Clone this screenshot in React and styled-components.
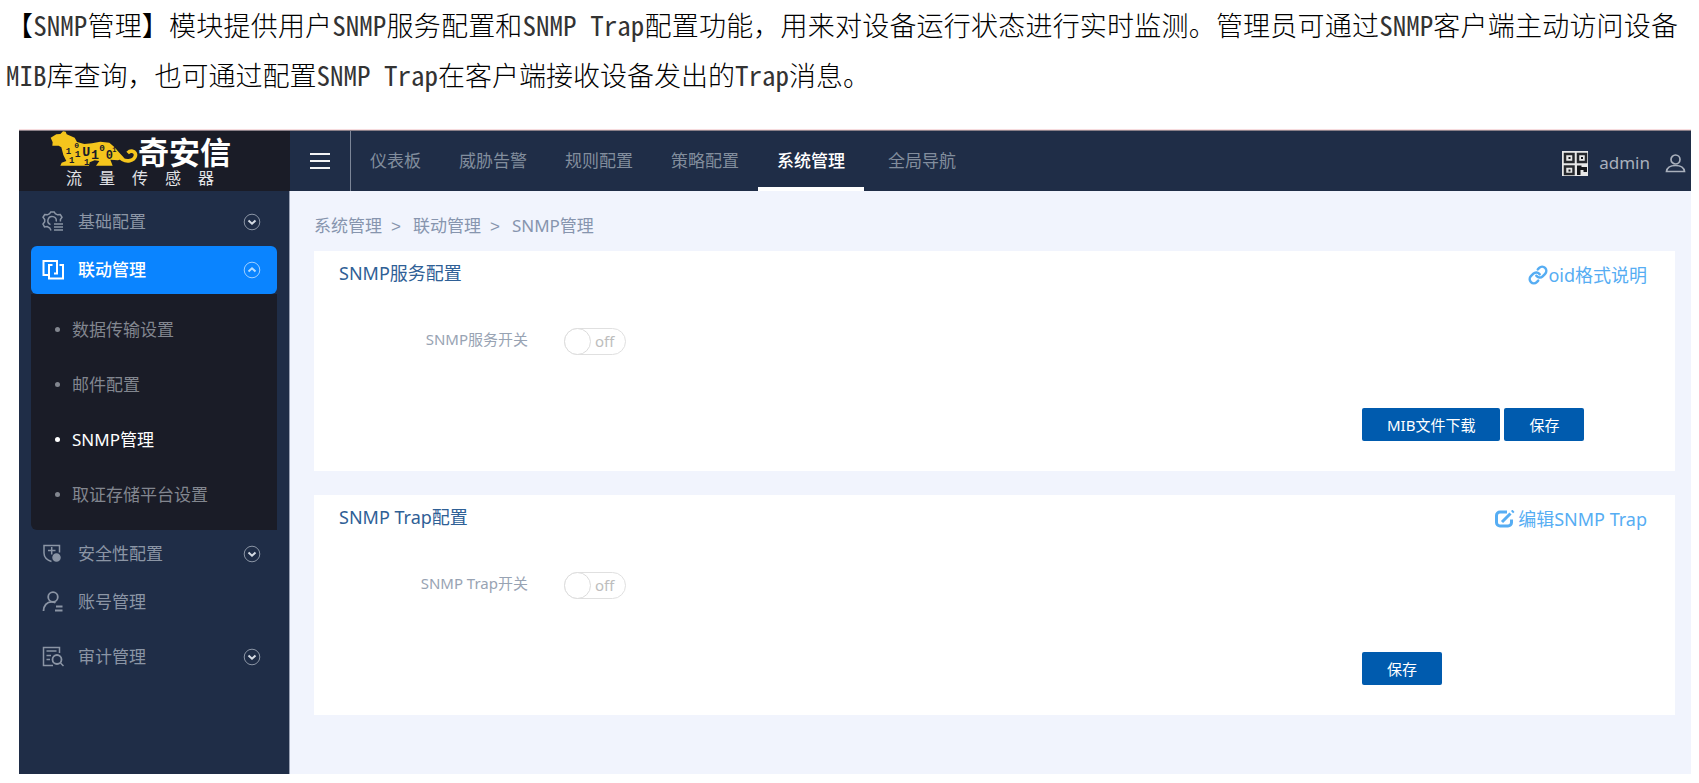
import React, { useState } from 'react';
import styled, { createGlobalStyle } from 'styled-components';
import { Link as LinkIcon } from 'lucide-react';

const GlobalStyle = createGlobalStyle`
  *, *::before, *::after { box-sizing: border-box; }
  body {
    margin: 0;
    background: #fff;
    font-family: "Noto Sans", "Noto Sans CJK SC", sans-serif;
    font-size: 17px;
    line-height: 24px;
  }
  button, input { font: inherit; }
  a { color: inherit; text-decoration: none; }
  ul, ol, p, h1, h2 { margin: 0; padding: 0; list-style: none; font-weight: 400; font-size: inherit; }
`;

/* Intro paragraph */
const Intro = styled.p`
  padding: 0 21px 0 6px;
  margin-bottom: 30px;
  font-family: "Noto Sans CJK SC", sans-serif;
  font-size: 27px;
  font-weight: 300;
  line-height: 50px;
  color: #000;
  text-align: justify;
`;
const Latin = styled.span`
  font-family: "Noto Sans Mono CJK SC", monospace;
  color: #333;
`;

/* Application frame */
const Frame = styled.div`
  display: flex;
  margin: 0 8px 10px 19px;
  border-top: 1px solid #8b8088;
  box-shadow: 0 -1px #f7dcde;
  background: #f1f4fd;
`;
const Sidebar = styled.aside`
  flex: 0 0 271px;
  background: #1f2d47;
  border-right: 1px solid #9aa2b5;
`;
const Brand = styled.div`
  height: 60px;
  padding-left: 31px;
  margin-right: -1px;
  background: #1a1c27;
`;
const BrandTop = styled.div`
  display: flex;
  height: 36px;
`;
const BrandName = styled.span`
  font-size: 31px;
  font-weight: 700;
  line-height: 42px;
  color: #fff;
`;
const BrandSub = styled.div`
  display: flex;
  gap: 17px;
  padding-left: 16px;
  font-size: 16px;
  line-height: 22px;
  color: #e3e4e8;
`;
const Menu = styled.ul`
  padding: 7px 12px 93px;
`;
const MenuItem = styled.li`
  margin-top: ${(p) => (p.$spaced ? 7 : 0)}px;
`;
const MenuButton = styled.button`
  display: flex;
  align-items: center;
  width: 100%;
  height: 48px;
  padding: 0 16px 0 11px;
  border: 0;
  border-radius: 6px;
  background: ${(p) => (p.$active ? '#0a84ff' : 'transparent')};
  color: ${(p) => (p.$active ? '#fff' : '#8b95a5')};
  text-align: left;
  cursor: pointer;
`;
const MenuText = styled.span`
  flex: 1;
  padding-left: 14px;
  font-weight: ${(p) => (p.$active ? 500 : 400)};
`;
const SubMenu = styled.ul`
  padding: 8px 0;
  background: #1a1c27;
  border-radius: 0 0 0 6px;
`;
const SubLink = styled.a`
  display: flex;
  align-items: center;
  height: 55px;
  padding-left: 24px;
  gap: 12px;
  color: ${(p) => (p.$active ? '#fff' : '#82868f')};
  &::before {
    content: "";
    width: 5px;
    height: 5px;
    border-radius: 50%;
    background: currentColor;
  }
`;

/* Top bar */
const Main = styled.div`
  flex: 1;
  min-width: 0;
`;
const TopBar = styled.header`
  display: flex;
  height: 60px;
  background: #1f2d47;
`;
const BurgerButton = styled.button`
  width: 61px;
  padding: 0;
  border: 0;
  border-right: 1px solid #7c8698;
  background: none;
  cursor: pointer;
  svg { display: block; margin: 0 auto; }
`;
const Nav = styled.nav`
  display: flex;
  flex: 1;
`;
const NavLink = styled.a`
  display: flex;
  align-items: center;
  padding: 3px 19px 0;
  margin-left: ${(p) => (p.$spaced ? 5 : 0)}px;
  border-bottom: 4px solid ${(p) => (p.$active ? '#fff' : 'transparent')};
  color: ${(p) => (p.$active ? '#fff' : '#828d9d')};
  font-weight: ${(p) => (p.$active ? 500 : 400)};
`;
const UserArea = styled.div`
  display: flex;
  align-items: center;
  gap: 11px;
  padding: 4px 5px 0 0;
  color: #a9b0bc;
`;
const IconButton = styled.button`
  display: flex;
  padding: 0;
  border: 0;
  background: none;
  color: inherit;
  cursor: pointer;
`;
const UserName = styled.span`
  padding-right: 4px;
`;

/* Page content */
const Content = styled.main`
  padding: 23px 16px 58px 24px;
`;
const Crumbs = styled.ol`
  display: flex;
  padding-bottom: 12px;
  color: #8795ae;
`;
const Crumb = styled.li`
  & + &::before {
    content: ">";
    padding: 0 12px 0 9px;
    font-family: "Liberation Sans", sans-serif;
  }
`;
const Card = styled.section`
  padding-bottom: 30px;
  background: #fff;
  & + & { margin-top: 24px; }
`;
const CardHead = styled.div`
  display: flex;
  justify-content: space-between;
  align-items: center;
  height: 48px;
  padding: 0 28px 0 25px;
  font-size: 18px;
`;
const CardTitle = styled.h2`
  padding-bottom: 4px;
  color: #2f6096;
`;
const CardLink = styled.a`
  display: flex;
  align-items: center;
  gap: ${(p) => p.$gap}px;
  color: #56adf3;
`;
const Field = styled.div`
  display: flex;
  align-items: center;
  gap: 36px;
  height: 28px;
  margin: 28px 0 53px;
  font-size: 15px;
`;
const FieldLabel = styled.label`
  width: 214px;
  padding-bottom: 4px;
  text-align: right;
  color: #98a3b3;
`;
const SwitchBox = styled.label`
  display: flex;
  align-items: center;
  width: 62px;
  height: 27px;
  border: 1px solid #e0e0e0;
  border-radius: 14px;
  color: #bdbdbd;
  cursor: pointer;
`;
const SwitchInput = styled.input`
  appearance: none;
  width: 27px;
  height: 27px;
  margin: 0 4px 0 -1px;
  border: 1px solid #dcdcdc;
  border-radius: 50%;
  background: #fff;
  cursor: pointer;
`;
const Actions = styled.div`
  display: flex;
  gap: 4px;
  width: 313px;
  margin-left: auto;
`;
const PrimaryButton = styled.button`
  height: 33px;
  padding: 0 25px;
  border: 0;
  border-radius: 2px;
  background: #005bae;
  color: #fff;
  font-size: 15px;
  cursor: pointer;
`;

const stroke = { fill: 'none', stroke: 'currentColor', strokeWidth: 1.5 };

const GearListIcon = () => (
  <svg width="22" height="22" viewBox="0 0 22 22" {...stroke}>
    <path d="M9 19.500L7.800 17 5.200 15.600 2.500 15.900 1 13 2.700 10.700V8.600L1 6.300 2.700 3.500 5.400 3.800 7.600 2.600 8.800.9H12.200L13.300 2.600 15.500 3.800 18.300 3.500 20 6.300 18.400 8.600V10.500" />
    <path d="M8.500 13.600A4.200 4.200 0 1 1 14.200 10.500M12 13H21M12 16H21M12 19H21" />
  </svg>
);
const CopyIcon = () => (
  <svg width="22" height="22" viewBox="0 0 22 22" {...stroke} strokeWidth="2">
    <path d="M7 16H1.500V2H15V14.500H12M10.500 6H7V19.500H21V6H17.500" />
  </svg>
);
const ShieldIcon = () => (
  <svg width="22" height="22" viewBox="0 0 22 22" {...stroke}>
    <path d="M9.500 18.500C5 17 2 14 2 10V2.500H17.500V9.500M6 7.500H13.500M9.700 4V11.500" />
    <circle cx="14.500" cy="14.500" r="3.500" fill="currentColor" />
  </svg>
);
const AccountIcon = () => (
  <svg width="22" height="22" viewBox="0 0 22 22" {...stroke} strokeWidth="1.8">
    <circle cx="11" cy="6" r="4.800" />
    <path d="M1.500 20C1.500 14.500 5 10.800 9.500 10.800C11 10.800 12.500 11.200 13.500 11.800M14 15.500H20.500M13 19.500H20.500" />
  </svg>
);
const AuditIcon = () => (
  <svg width="22" height="22" viewBox="0 0 22 22" {...stroke}>
    <path d="M11 19.500H1.500V1.500H17.500V7M4.500 5H14.500M4.500 9.500H9M4.500 13.500H8M18.500 17L21.500 20" />
    <circle cx="15" cy="13.500" r="4.500" strokeWidth="1.800" />
  </svg>
);
const ArrowIcon = ({ up }) => (
  <svg width="18" height="18" viewBox="0 0 18 18" fill="none" stroke="currentColor">
    <circle cx="9" cy="9" r="7.800" opacity={up ? 0.6 : 1} />
    <path
      d={up ? 'M5.500 10.500 9 7.300 12.500 10.500' : 'M5.500 7.500 9 10.700 12.500 7.500'}
      stroke={up ? '#b5dcff' : '#d5dbe4'}
      strokeWidth="2"
    />
  </svg>
);
const QrIcon = () => (
  <svg width="26" height="25" viewBox="0 0 26 25">
    <path d="M0 0H26V25H0Z" fill="#e8e8e8" />
    <g fill="none" stroke="#26282c" strokeWidth="2.500">
      <path d="M3 3H11.500V11H3ZM16 3H24V11H16ZM3 15.500H11.500V23H3Z" />
    </g>
    <path d="M6.500 6H8.500V8H6.500ZM19 6H21V8H19ZM6.500 18.500H8.500V20.500H6.500ZM15 14.500H19.500V16H25V21H21.500V19H18.500V24H15Z" fill="#15171b" />
  </svg>
);
const UserIcon = () => (
  <svg width="21" height="19" viewBox="0 0 21 19" fill="none" stroke="currentColor" strokeWidth="1.700">
    <circle cx="10.500" cy="5.500" r="4.500" />
    <path d="M1.500 17.500C2 13.500 5 11.500 10.500 11.500S19 13.500 19.500 17.500Z" />
  </svg>
);
const EditIcon = () => (
  <svg width="20" height="18" viewBox="0 0 20 18" fill="none" stroke="currentColor">
    <path d="M12 2H5A3.500 3.500 0 0 0 1.500 5.500V12.500A3.500 3.500 0 0 0 5 16H13A3.500 3.500 0 0 0 16.500 12.500V9.500" strokeWidth="3" />
    <path d="M7 12 15.500 3.500M17 2.200 18.500 .8" strokeWidth="3" />
  </svg>
);
const TigerLogo = () => (
  <svg width="88" height="36" viewBox="119 18 264 108" aria-hidden="true">
    <path
      fill="#f4c51d"
      d="M121 38 138 28 150 27 158 19 166 20 169 28 193 38 200 51 222 57 245 55 270 50 297 53 312 66 327 83 341 98 323 106 300 104 307 122H257L267 108 253 106 238 112 236 122H150L154 113 168 108 159 90 153 67 145 62H126L127 52Z"
    />
    <path fill="none" stroke="#f4c51d" strokeWidth="11" d="M320 88C334 105 346 110 358 107C378 103 381 82 367 79C360 77 354 82 352 84" />
    <g fill="#1a1c27" fontFamily="Liberation Mono" fontWeight="700">
      <text x="166" y="86" fontSize="27">1</text>
      <text x="192" y="69" fontSize="24">0</text>
      <text x="176" y="114" fontSize="27">1</text>
      <text x="193" y="97" fontSize="29">1</text>
      <text x="216" y="93" fontSize="40">U</text>
      <text x="221" y="119" fontSize="27">1</text>
      <text x="242" y="101" fontSize="40">1</text>
      <text x="267" y="78" fontSize="28">0</text>
      <text x="286" y="101" fontSize="36">0</text>
      <text x="306" y="80" fontSize="21">1</text>
    </g>
  </svg>
);

const submenu = ['数据传输设置', '邮件配置', 'SNMP管理', '取证存储平台设置'];
const menu = [
  { text: '基础配置', Icon: GearListIcon, arrow: true },
  { text: '联动管理', Icon: CopyIcon, arrow: true, active: true },
  { text: '安全性配置', Icon: ShieldIcon, arrow: true },
  { text: '账号管理', Icon: AccountIcon },
  { text: '审计管理', Icon: AuditIcon, arrow: true, spaced: true },
];
const nav = ['仪表板', '威胁告警', '规则配置', '策略配置', '系统管理', '全局导航'];

function SwitchField({ id, label }) {
  const [on, setOn] = useState(false);
  return (
    <Field>
      <FieldLabel htmlFor={id}>{label}</FieldLabel>
      <SwitchBox>
        <SwitchInput id={id} type="checkbox" role="switch" checked={on} onChange={() => setOn(!on)} />
        {on ? 'on' : 'off'}
      </SwitchBox>
    </Field>
  );
}

export default function App() {
  return (
    <>
      <GlobalStyle />
      <Intro>
        【<Latin>SNMP</Latin>管理】模块提供用户<Latin>SNMP</Latin>服务配置和<Latin>SNMP Trap</Latin>
        配置功能，用来对设备运行状态进行实时监测。管理员可通过<Latin>SNMP</Latin>客户端主动访问设备
        <Latin>MIB</Latin>库查询，也可通过配置<Latin>SNMP Trap</Latin>在客户端接收设备发出的
        <Latin>Trap</Latin>消息。
      </Intro>
      <Frame>
        <Sidebar>
          <Brand>
            <BrandTop>
              <TigerLogo />
              <BrandName>奇安信</BrandName>
            </BrandTop>
            <BrandSub>
              {['流', '量', '传', '感', '器'].map((c) => <span key={c}>{c}</span>)}
            </BrandSub>
          </Brand>
          <Menu>
            {menu.map(({ text, Icon, arrow, active, spaced }) => (
              <MenuItem key={text} $spaced={spaced}>
                <MenuButton type="button" $active={active}>
                  <Icon />
                  <MenuText $active={active}>{text}</MenuText>
                  {arrow && <ArrowIcon up={active} />}
                </MenuButton>
                {active && (
                  <SubMenu>
                    {submenu.map((s) => (
                      <li key={s}><SubLink href="#" $active={s === 'SNMP管理'}>{s}</SubLink></li>
                    ))}
                  </SubMenu>
                )}
              </MenuItem>
            ))}
          </Menu>
        </Sidebar>
        <Main>
          <TopBar>
            <BurgerButton type="button" aria-label="菜单">
              <svg width="20" height="18" viewBox="0 0 20 18" stroke="#f2f3f5" strokeWidth="2">
                <path d="M0 2H20M0 9H20M0 16H20" />
              </svg>
            </BurgerButton>
            <Nav>
              {nav.map((n) => (
                <NavLink key={n} href="#" $active={n === '系统管理'} $spaced={n === '全局导航'}>{n}</NavLink>
              ))}
            </Nav>
            <UserArea>
              <IconButton type="button" aria-label="二维码"><QrIcon /></IconButton>
              <UserName>admin</UserName>
              <IconButton type="button" aria-label="用户"><UserIcon /></IconButton>
            </UserArea>
          </TopBar>
          <Content>
            <Crumbs>
              <Crumb>系统管理</Crumb>
              <Crumb>联动管理</Crumb>
              <Crumb>SNMP管理</Crumb>
            </Crumbs>
            <Card>
              <CardHead>
                <CardTitle>SNMP服务配置</CardTitle>
                <CardLink href="#" $gap={0}><LinkIcon size={20} strokeWidth={3} />oid格式说明</CardLink>
              </CardHead>
              <SwitchField id="snmp-service" label="SNMP服务开关" />
              <Actions>
                <PrimaryButton type="button">MIB文件下载</PrimaryButton>
                <PrimaryButton type="button">保存</PrimaryButton>
              </Actions>
            </Card>
            <Card>
              <CardHead>
                <CardTitle>SNMP Trap配置</CardTitle>
                <CardLink href="#" $gap={3}><EditIcon />编辑SNMP Trap</CardLink>
              </CardHead>
              <SwitchField id="snmp-trap" label="SNMP Trap开关" />
              <Actions>
                <PrimaryButton type="button">保存</PrimaryButton>
              </Actions>
            </Card>
          </Content>
        </Main>
      </Frame>
    </>
  );
}
